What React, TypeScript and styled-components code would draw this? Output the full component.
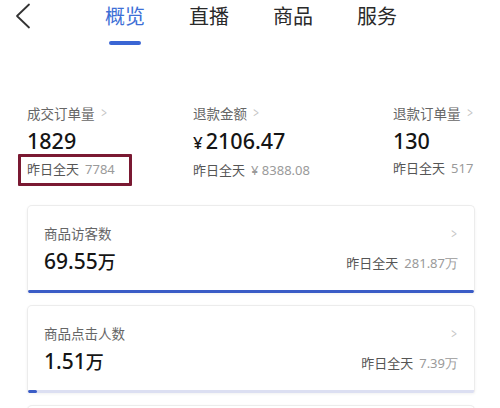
import * as React from "react"
import styled, { createGlobalStyle } from "styled-components"

const Global = createGlobalStyle`
  html, body {
    margin: 0;
    padding: 0;
    background: #fff;
    width: 500px;
    height: 408px;
    overflow: hidden;
    font-family: "Noto Sans", "Noto Sans CJK SC", sans-serif;
  }
`

const Page = styled.div`
  width: 500px;
  height: 408px;
  overflow: hidden;
  background: #fff;
`

const Header = styled.header`
  display: flex;
  align-items: flex-start;
  height: 58px;
  padding-left: 14px;
`

const Back = styled.button`
  border: 0;
  background: none;
  padding: 0;
  margin-top: 3px;
  width: 20px;
  height: 26px;
  display: flex;
`

const Tabs = styled.nav`
  display: flex;
  gap: 44px;
  margin-left: 71px;
`

interface TabProps {
  active?: boolean
}
const Tab = styled.div<TabProps>`
  display: flex;
  flex-direction: column;
  align-items: center;
  white-space: nowrap;
  font-family: "Noto Sans CJK SC", sans-serif;
  font-size: 20px;
  line-height: 30px;
  color: ${(p) => (p.active ? "#3d6fd6" : "#2a2a2a")};
  width: 40px;
  margin-top: 1px;

  &::after {
    content: "";
    width: 32px;
    height: 4px;
    border-radius: 2px;
    margin-top: 10px;
    background: ${(p) => (p.active ? "#3a66d4" : "transparent")};
  }
`

const Stats = styled.section`
  display: grid;
  grid-template-columns: 166px 200px 1fr;
  padding-left: 27px;
  margin-top: 45px;
  white-space: nowrap;
  overflow: hidden;
`

const Stat = styled.div`
  display: flex;
  flex-direction: column;
  align-items: flex-start;
`

const Label = styled.div`
  display: flex;
  align-items: center;
  gap: 5px;
  font-family: "Noto Sans CJK SC", sans-serif;
  font-size: 13.5px;
  line-height: 20px;
  color: #666;
`

const Chevron = styled.span`
  font-family: "Noto Sans", sans-serif;
  font-size: 14px;
  color: #c4c4c4;
  transform: scaleX(0.7);
`

const Value = styled.div`
  font-family: "Noto Sans", "Noto Sans CJK SC", sans-serif;
  font-size: 21.5px;
  font-weight: 500;
  line-height: 28px;
  color: #151515;
  margin-top: 4px;
`

const Yuan = styled.span`
  font-size: 17px;
  margin-right: 3px;
`

interface SubProps {
  marked?: boolean
}
const Sub = styled.div<SubProps>`
  font-family: "Noto Sans CJK SC", sans-serif;
  font-size: 13px;
  line-height: 20px;
  color: #555;
  margin-top: 1px;
  ${(p) =>
    p.marked
      ? `
    border: 3px solid #7a1932;
    border-radius: 1px;
    margin-left: -9px;
    margin-top: -1px;
    padding: 2px 14px 4px 6px;
  `
      : "padding: 2px 0;"}
`

const Muted = styled.span`
  font-family: "Noto Sans", sans-serif;
  color: #9a9a9a;
  margin-left: 6px;
  font-size: 13px;
`

const Cards = styled.section`
  display: flex;
  flex-direction: column;
  gap: 12px;
  margin: 19px 25px 0 27px;
`

const Card = styled.div`
  display: flex;
  flex-direction: column;
  height: 88px;
  flex-shrink: 0;
  border: 1px solid #ececec;
  border-bottom: 0;
  border-radius: 5px 5px 2px 2px;
  box-shadow: 0 1px 3px rgba(0, 0, 0, 0.06);
  box-sizing: border-box;
  overflow: hidden;
`

const CardBody = styled.div`
  flex: 1;
  padding: 17px 16px 0 16px;
  display: flex;
  flex-direction: column;
  gap: 4px;
`

const Row = styled.div`
  display: flex;
  justify-content: space-between;
  align-items: center;
`

const CardValue = styled.div`
  font-family: "Noto Sans", "Noto Sans CJK SC", sans-serif;
  font-size: 21px;
  font-weight: 500;
  line-height: 28px;
  color: #151515;
`

const Wan = styled.span`
  font-family: "Noto Sans CJK SC", sans-serif;
  font-size: 18px;
`

const CardSub = styled.div`
  font-family: "Noto Sans CJK SC", sans-serif;
  font-size: 13px;
  color: #555;
  margin-top: 4px;
`

const Track = styled.div`
  height: 3px;
  background: #dcdff2;
`

const Fill = styled.div`
  height: 100%;
  background: #3a5cc6;
  border-radius: 2px;
`

const stats = [
  { label: "成交订单量", value: "1829", prev: "7784", marked: true },
  { label: "退款金额", value: "2106.47", prev: "¥ 8388.08", yuan: true },
  { label: "退款订单量", value: "130", prev: "517" },
]

const cards = [
  { label: "商品访客数", value: "69.55", prev: "281.87万", ratio: 1 },
  { label: "商品点击人数", value: "1.51", prev: "7.39万", ratio: 0.02 },
]

const App = () => (
  <Page>
    <Global />
    <Header>
      <Back aria-label="back">
        <svg width="18" height="26" viewBox="0 0 18 26">
          <path d="M15 1.5 L3 13 L15 24.5" fill="none" stroke="#333" strokeWidth="1.8" strokeLinecap="round" strokeLinejoin="round" />
        </svg>
      </Back>
      <Tabs>
        <Tab active>概览</Tab>
        <Tab>直播</Tab>
        <Tab>商品</Tab>
        <Tab>服务</Tab>
      </Tabs>
    </Header>

    <Stats>
      {stats.map((s) => (
        <Stat key={s.label}>
          <Label>
            {s.label}
            <Chevron>&gt;</Chevron>
          </Label>
          <Value>
            {s.yuan && <Yuan>¥</Yuan>}
            {s.value}
          </Value>
          <Sub marked={s.marked}>
            昨日全天<Muted>{s.prev}</Muted>
          </Sub>
        </Stat>
      ))}
    </Stats>

    <Cards>
      {cards.map((c) => (
        <Card key={c.label}>
          <CardBody>
            <Row>
              <Label>{c.label}</Label>
              <Chevron>&gt;</Chevron>
            </Row>
            <Row>
              <CardValue>
                {c.value}
                <Wan>万</Wan>
              </CardValue>
              <CardSub>
                昨日全天<Muted>{c.prev}</Muted>
              </CardSub>
            </Row>
          </CardBody>
          <Track>
            <Fill style={{ width: `${c.ratio * 100}%` }} />
          </Track>
        </Card>
      ))}
      <Card />
    </Cards>
  </Page>
)

export default App
